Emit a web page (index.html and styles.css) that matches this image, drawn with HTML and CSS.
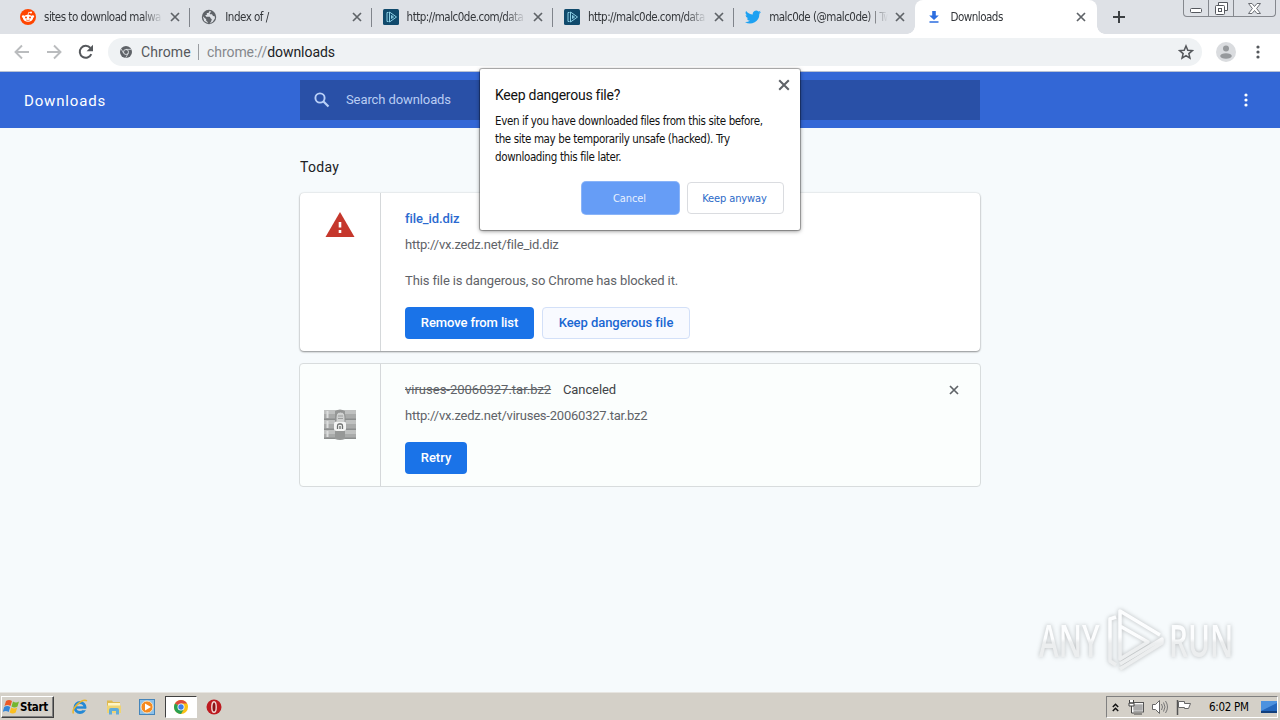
FILE: index.html
```
<!DOCTYPE html>
<html lang="en">
<head>
  <meta charset="UTF-8">
  <title>Downloads</title>
  <link rel="stylesheet" href="styles.css">
</head>
<body>
  <svg class="defs" width="0" height="0">
    <symbol id="x" viewBox="0 0 10 10"><path d="M1 1l8 8M9 1l-8 8" stroke="currentColor" stroke-width="1.7" fill="none"/></symbol>
    <symbol id="play" viewBox="0 0 16 16"><rect width="16" height="16" rx="1.5" fill="#104a6c"/><path d="M5.500 3.500H4v9h1.500M6.500 3v10l7-5zM8.500 6.500v3l2-1.500z" stroke="#8bd0e6" fill="none"/></symbol>
    <symbol id="dots" viewBox="0 0 4 14"><circle cx="2" cy="2" r="1.6"/><circle cx="2" cy="7" r="1.6"/><circle cx="2" cy="12" r="1.6"/></symbol>
  </svg>

  <div class="tabs">
    <div class="tab">
      <svg class="favicon" viewBox="0 0 16 16"><circle cx="8" cy="8" r="8" fill="#ff4500"/><ellipse cx="8" cy="9.2" rx="5" ry="3.5" fill="#fff"/><circle cx="3.2" cy="7.6" r="1.3" fill="#fff"/><circle cx="12.8" cy="7.6" r="1.3" fill="#fff"/><circle cx="11" cy="3.6" r="1" fill="#fff"/><path d="M8 6l.7-2.7 2.3.4" stroke="#fff" stroke-width=".8" fill="none"/><circle cx="6" cy="8.5" r="1" fill="#ff4500"/><circle cx="10" cy="8.5" r="1" fill="#ff4500"/><path d="M6 10.9q2 1.2 4 0" stroke="#ff4500" stroke-width=".7" fill="none"/></svg>
      <span class="tab-title">sites to download malwa</span>
      <svg class="close"><use href="#x"/></svg>
    </div>
    <div class="tab">
      <svg class="favicon" viewBox="0 0 16 16"><circle cx="8" cy="8" r="7.2" fill="#5f6368"/><path d="M8.8 1.8L7.4 4H5.8v2H4.2l1 1.7h3.6l1 1.8 1 .8-.7 2.2-1.3 2 3-1.7 2.2-3.5-.3-2-1.7-.4-1-1.6H9l-.3-1.3 1.5-1z M1.8 7.3l3.4 3v1.5l1.5 1.1v1.2L3.2 12z" fill="#dee1e6"/></svg>
      <span class="tab-title">Index of /</span>
      <svg class="close"><use href="#x"/></svg>
    </div>
    <div class="tab">
      <svg class="favicon"><use href="#play"/></svg>
      <span class="tab-title">http://malc0de.com/data</span>
      <svg class="close"><use href="#x"/></svg>
    </div>
    <div class="tab">
      <svg class="favicon"><use href="#play"/></svg>
      <span class="tab-title">http://malc0de.com/data</span>
      <svg class="close"><use href="#x"/></svg>
    </div>
    <div class="tab last">
      <svg class="favicon" viewBox="0 0 24 24"><path fill="#1da1f2" d="M24 4.6a10 10 0 0 1-2.8.8 5 5 0 0 0 2.1-2.7 10 10 0 0 1-3.1 1.2 4.9 4.9 0 0 0-8.4 4.5A14 14 0 0 1 1.7 3.1a4.9 4.9 0 0 0 1.5 6.6 5 5 0 0 1-2.2-.6 4.9 4.9 0 0 0 3.9 4.9 5 5 0 0 1-2.2.1 4.9 4.9 0 0 0 4.6 3.4A9.9 9.9 0 0 1 0 19.5 14 14 0 0 0 21.5 7.1 10 10 0 0 0 24 4.6z"/></svg>
      <span class="tab-title">malc0de (@malc0de) | Tw</span>
      <svg class="close"><use href="#x"/></svg>
    </div>
    <div class="tab active">
      <svg class="favicon" viewBox="0 0 16 16"><path d="M6.2 2h3.6v4.5h3L8 11 3.2 6.500h3zM3.500 12.300h9v1.500h-9z" fill="#2c6ee0"/></svg>
      <span class="tab-title">Downloads</span>
      <svg class="close"><use href="#x"/></svg>
    </div>
    <svg class="new-tab" viewBox="0 0 12 12"><path d="M6 0v12M0 6h12" stroke="#3c4043" stroke-width="2"/></svg>
    <div class="window-buttons">
      <span><svg width="12" height="6"><rect x=".5" y=".5" width="11" height="4" rx="1" fill="#fff" stroke="#55585e"/></svg></span>
      <span><svg width="13" height="13"><path d="M3.500 3.500v-3h9v8h-3" fill="#fff" stroke="#55585e"/><rect x=".5" y="3.500" width="9" height="9" rx="1" fill="#fff" stroke="#55585e"/><rect x="3.500" y="6.500" width="3" height="3" fill="none" stroke="#55585e"/></svg></span>
      <span class="wide"><svg width="13" height="11"><path d="M.5.500h3.500l2.500 3 2.500-3h3.500L8.600 5.500l3.900 5H9l-2.500-3-2.500 3H.5l3.900-5z" fill="#fff" stroke="#6b6e74"/></svg></span>
    </div>
  </div>

  <div class="toolbar">
    <svg class="nav" viewBox="0 0 16 16"><path d="M15 8H2M8 1.500L1.500 8 8 14.500" stroke="#babcbe" stroke-width="1.900" fill="none"/></svg>
    <svg class="nav" viewBox="0 0 16 16"><path d="M1 8h13M8 1.500L14.500 8 8 14.500" stroke="#babcbe" stroke-width="1.900" fill="none"/></svg>
    <svg class="nav" viewBox="0 0 16 16"><path d="M13.300 10.200A6 6 0 1 1 12.400 4" stroke="#55585c" stroke-width="2" fill="none"/><path d="M15 .8v6.400H8.600z" fill="#55585c"/></svg>
    <div class="omnibox">
      <svg class="chrome" viewBox="0 0 12 12"><circle cx="6" cy="6" r="6" fill="#5f6368"/><circle cx="6" cy="6" r="2.500" fill="#5f6368" stroke="#eef1f4" stroke-width=".8"/><path d="M6 3.400h5.300M3.700 7.300L1.100 2.900M8.300 7.300L5.700 11.800" stroke="#eef1f4" stroke-width=".7"/></svg>
      <span class="site">Chrome</span>
      <span class="bar"></span>
      <span class="url"><i>chrome://</i>downloads</span>
      <svg class="star" viewBox="0 0 24 24"><path d="M12 3l2.700 6.300 6.800.6-5.200 4.500 1.600 6.700L12 17.500l-5.900 3.600 1.600-6.700-5.200-4.500 6.800-.6z" fill="none" stroke="#55585c" stroke-width="2.300"/></svg>
    </div>
    <svg class="avatar" viewBox="0 0 20 20"><circle cx="10" cy="10" r="10" fill="#dadcdf"/><circle cx="10" cy="6.500" r="3" fill="#96999c"/><ellipse cx="10" cy="14" rx="5.800" ry="2.800" fill="#96999c"/></svg>
    <svg class="menu"><use href="#dots"/></svg>
  </div>

  <div class="header">
    <h1>Downloads</h1>
    <div class="search">
      <svg viewBox="0 0 16 16"><circle cx="6" cy="6" r="4.600" fill="none" stroke="#b9d0f8" stroke-width="1.900"/><path d="M9.500 9.500l5 5" stroke="#b9d0f8" stroke-width="2.200"/></svg>
      <span>Search downloads</span>
    </div>
    <svg class="menu"><use href="#dots"/></svg>
  </div>

  <div class="content">
    <h2>Today</h2>
    <div class="card danger">
      <div class="file-icon">
        <svg width="30" height="25" viewBox="0 0 30 25"><path d="M15 0l14.500 25H.5z" fill="#c5372c"/><path d="M15 10v5.500M15 18v3" stroke="#fff" stroke-width="2.600"/></svg>
      </div>
      <div class="details">
        <div class="name"><a>file_id.diz</a></div>
        <div class="link">http://vx.zedz.net/file_id.diz</div>
        <div class="description">This file is dangerous, so Chrome has blocked it.</div>
        <div class="actions">
          <button class="remove">Remove from list</button>
          <button class="keep">Keep dangerous file</button>
        </div>
      </div>
    </div>
    <div class="card canceled">
      <div class="file-icon">
        <svg width="32" height="32" viewBox="0 0 32 32"><rect y="1" width="32" height="29" rx="1" fill="#a9abaa"/><path d="M0 1h32v4H0zM0 11h32v4H0zM0 21h32v4H0z" fill="#bfc1c0"/><path d="M0 9.500h32v1.500H0zM0 19.500h32v1.500H0zM0 28.500h32v1.500H0z" fill="#8b8e8d"/><path d="M3.500 2v7M3.500 12v7M3.500 22v6" stroke="#dcdedd" stroke-width="2"/><path d="M11 2q5-3 10 0v28q-5 2-10 0z" fill="#969897"/><path d="M12 13V8q0-5 4.500-5T21 8v5z" fill="#cfd1d0" stroke="#8d8f8e"/><path d="M14 7h5M14 9.500h5" stroke="#9c9e9d"/><rect x="10" y="12.500" width="12" height="9.500" rx="2.500" fill="#f4f5f4"/><path d="M13.500 20v-3q0-2 1.500-2h2q1.500 0 1.500 2v3M16 17v3" fill="none" stroke="#6d706f" stroke-width="1.300"/></svg>
      </div>
      <div class="details">
        <div class="name"><s>viruses-20060327.tar.bz2</s><span>Canceled</span><svg class="close"><use href="#x"/></svg></div>
        <div class="link">http://vx.zedz.net/viruses-20060327.tar.bz2</div>
        <div class="actions"><button class="retry">Retry</button></div>
      </div>
    </div>
  </div>

  <div class="watermark">
    <span>ANY</span>
    <svg width="58" height="64" viewBox="0 0 58 64">
      <linearGradient id="fade" gradientUnits="userSpaceOnUse" x1="0" y1="0" x2="0" y2="64"><stop offset=".45" stop-color="#fcfdfe"/><stop offset=".55" stop-color="#eceeef"/></linearGradient>
      <g fill="none" stroke="url(#fade)" stroke-width="3.500" stroke-linejoin="round"><path d="M9 9L3 11v42l6 4"/><path d="M53 27L13 3v48l28-17-28-16"/><path d="M13 61l42-26v-4L13 56"/></g>
    </svg>
    <span>RUN</span>
  </div>

  <div class="dialog">
    <svg class="dialog-close"><use href="#x"/></svg>
    <h3>Keep dangerous file?</h3>
    <p>Even if you have downloaded files from this site before,<br>the site may be temporarily unsafe (hacked). Try<br>downloading this file later.</p>
    <div class="dialog-actions">
      <button class="cancel">Cancel</button>
      <button class="anyway">Keep anyway</button>
    </div>
  </div>

  <div class="taskbar">
    <div class="start">
      <svg width="17" height="16" viewBox="0 0 17 16"><path d="M3 2q3-2 6 0L7.500 7q-3-2-6 0z" fill="#ed5a26"/><path d="M10 2.500q3 2 6 0L14.500 7.500q-3 2-6 0z" fill="#75b62e"/><path d="M1.200 8q3-2 6 0l-1.500 5q-3-2-6 0z" fill="#3586d8"/><path d="M8.200 8.500q3 2 6 0l-1.500 5q-3 2-6 0z" fill="#fbbf20"/></svg>
      <span>Start</span>
    </div>
    <div class="task"><svg viewBox="0 0 16 16"><circle cx="8" cy="8.500" r="5" fill="none" stroke="#2589d5" stroke-width="3"/><path d="M4 8.500h9.500" stroke="#2589d5" stroke-width="2.400"/><path d="M11 10.500h5" stroke="#d4d0c8" stroke-width="1.500"/><path d="M1.500 14.500C-1 10 10-1 15 1.800" fill="none" stroke="#eab62d" stroke-width="1.500"/></svg></div>
    <div class="task"><svg viewBox="0 0 16 16"><path d="M1 1.500h5l1 1.500h7v11H1z" fill="#dfb950"/><path d="M2 4h12v5H2z" fill="#fff5c4"/><path d="M1 6.500h14v7.500H1z" fill="#efd473"/><path d="M3 15.500V11q0-2 2-2h6q2 0 2 2v4.500h-3V12H6v3.500z" fill="#5fabd9"/></svg></div>
    <div class="task"><svg viewBox="0 0 16 16"><rect x=".5" y=".5" width="15" height="15" fill="#8cc1ea" stroke="#4585ba"/><circle cx="8" cy="8" r="6" fill="#f58a1f" stroke="#fce2bd"/><path d="M6 4.500v7L12 8z" fill="#fff"/></svg></div>
    <div class="task pressed"><svg viewBox="0 0 16 16"><circle cx="8" cy="8" r="7" fill="#fbc116"/><path d="M8 8L1.940 4.500A7 7 0 0 1 14.060 4.500z" fill="#dd4b3e"/><path d="M8 8L1.940 4.500A7 7 0 0 0 8 15l3-5z" fill="#2aa052"/><path d="M8 4.500h6.060L15 8H8z" fill="#fbc116"/><circle cx="8" cy="8" r="3.500" fill="#fff"/><circle cx="8" cy="8" r="2.700" fill="#3f7fea"/></svg></div>
    <div class="task"><svg viewBox="0 0 16 16"><circle cx="8" cy="8" r="7.500" fill="#bd1a20"/><ellipse cx="8" cy="8" rx="2.200" ry="5.300" fill="#8a1217" stroke="#f2d8d6" stroke-width="1.400"/></svg></div>
    <div class="tray">
      <svg width="7" height="9" viewBox="0 0 7 9"><path d="M.8 4l2.700-2.700L6.200 4M.8 8l2.700-2.700L6.200 8" stroke="#111" stroke-width="1.500" fill="none"/></svg>
      <svg class="net" width="16" height="15" viewBox="0 0 16 15"><rect x="4.500" y="3.500" width="11" height="8" fill="#aaa" stroke="#f8f8f8" stroke-width="1.600"/><rect x="3.500" y="2.500" width="12" height="9.500" fill="none" stroke="#555"/><path d="M6 14h8M1.500 0v3h4V0M1 3h5v3H1zM3.500 6v7H6" stroke="#444" fill="#fff"/></svg>
      <svg class="sound" width="16" height="14" viewBox="0 0 16 14"><path d="M.5 4.500h3l4-4v13l-4-4h-3z" fill="#fff" stroke="#666"/><path d="M9.500 4q2 3 0 6M11.500 2.500q3 4.500 0 9M13.500 1q4 6 0 12" fill="none" stroke="#777"/></svg>
      <svg class="flag" width="16" height="15" viewBox="0 0 16 15"><path d="M1.500 0v15" stroke="#555" stroke-width="1.500"/><path d="M2.500 1.500h6v2h6l-2 5h-4v-1h-6z" fill="#fff" stroke="#666"/></svg>
      <span>6:02 PM</span>
      <svg class="desktop" width="16" height="13" viewBox="0 0 16 13"><rect width="16" height="10" fill="#2367bd"/><path d="M0 10L16 2V0H0z" fill="#4c92df"/><path d="M0 10h16v2H0z" fill="#123f7d"/></svg>
    </div>
  </div>
</body>
</html>
```
FILE: styles.css
```
* {
  margin: 0;
  padding: 0;
  box-sizing: border-box;
}
body {
  width: 1280px;
  height: 720px;
  display: flex;
  flex-direction: column;
  overflow: hidden;
  position: relative;
  background: #f6fafc;
  font-family: Roboto, sans-serif;
  font-size: 13px;
  color: #202124;
}
svg {
  flex: none;
  display: block;
}
.defs {
  position: absolute;
}
.tabs {
  height: 34px;
  flex: none;
  display: flex;
  padding-left: 9px;
  background: #dee1e6;
  font-family: "DejaVu Sans Condensed", "DejaVu Sans", sans-serif;
  font-stretch: condensed;
  font-size: 11.5px;
  letter-spacing: -.5px;
}
.tab {
  width: 181.300px;
  flex: none;
  display: flex;
  align-items: center;
  padding: 0 10px 0 11px;
  background: linear-gradient(#80848b, #80848b) right 8px / 1px 19px no-repeat;
}
.tab.last {
  background: none;
}
.tab.active {
  width: 181.500px;
  height: 34px;
  position: relative;
  background: #fff;
  border-radius: 8px 8px 0 0;
  padding-left: 11px;
}
/* curved feet of the active tab */
.tab.active::before,
.tab.active::after {
  content: '';
  position: absolute;
  bottom: 0;
  width: 8px;
  height: 8px;
}
.tab.active::before {
  left: -8px;
  background: radial-gradient(circle at 0 0, transparent 7.500px, #fff 8px);
}
.tab.active::after {
  right: -8px;
  background: radial-gradient(circle at 100% 0, transparent 7.500px, #fff 8px);
}
.favicon {
  width: 16px;
  height: 16px;
}
.tab-title {
  width: 120px;
  margin-left: 8px;
  white-space: nowrap;
  color: #33363a;
  -webkit-mask-image: linear-gradient(to right, #000 98px, transparent 119px);
}
.close {
  width: 10px;
  height: 10px;
  color: #5f6368;
}
.tab .close {
  margin-left: auto;
}
.active .close {
  margin-right: 1px;
}
.new-tab {
  width: 12px;
  height: 12px;
  margin: 11px 0 0 16px;
}
.window-buttons {
  display: flex;
  width: 93px;
  height: 17px;
  margin: 0 4px 0 auto;
  border: 1px solid #85888e;
  border-top: 0;
  border-radius: 0 0 4px 4px;
}
.window-buttons span {
  width: 25px;
  display: flex;
  align-items: center;
  justify-content: center;
  border-right: 1px solid #85888e;
}
.window-buttons span:first-child {
  align-items: flex-end;
  padding-bottom: 2px;
}
.window-buttons .wide {
  width: 41px;
  border: 0;
}
.toolbar {
  height: 38px;
  flex: none;
  display: flex;
  align-items: center;
  gap: 16px;
  padding: 0 19px 1px 14px;
  background: #fff;
  border-bottom: 1px solid #b9c2d4;
}
.nav {
  width: 16px;
  height: 16px;
}
.omnibox {
  width: 1094px;
  height: 28px;
  margin-left: -2px;
  display: flex;
  align-items: center;
  padding: 0 8px 0 12px;
  border-radius: 14px;
  background: #eff2f4;
  font-size: 14px;
  color: #55585c;
}
.chrome {
  width: 12px;
  height: 12px;
}
.site {
  margin-left: 9px;
  width: 50px;
  letter-spacing: .1px;
}
.bar {
  width: 1px;
  height: 16px;
  margin: 0 8px 0 7px;
  background: #9a9da1;
}
.url {
  color: #202124;
  letter-spacing: -.06px;
}
.url i {
  font-style: normal;
  color: #85888c;
}
.star {
  width: 16px;
  height: 16px;
  margin-left: auto;
}
.avatar {
  width: 20px;
  height: 20px;
  margin-left: -2px;
}
.menu {
  width: 4px;
  height: 14px;
  fill: #55585c;
}
.toolbar .menu {
  margin-left: 4px;
}
.header {
  height: 56px;
  flex: none;
  display: flex;
  align-items: center;
  padding: 0 32px 0 24px;
  background: #3367d6;
}
.header h1 {
  width: 276px;
  padding-top: 1px;
  font-size: 15px;
  font-weight: 400;
  letter-spacing: .85px;
  color: #fff;
}
.search {
  width: 680px;
  height: 40px;
  display: flex;
  align-items: center;
  gap: 16px;
  padding-left: 14px;
  background: #2950a7;
  color: #b9cdf3;
  letter-spacing: -.1px;
}
.search span {
  margin-top: -1px;
}
.search svg {
  width: 16px;
  height: 16px;
}
.header .menu {
  margin-left: auto;
  fill: #fff;
}
.content {
  width: 680px;
  margin: 0 auto;
  flex: 1;
}
.content h2 {
  height: 65px;
  padding-top: 29px;
  font-size: 14px;
  line-height: 20px;
  font-weight: 400;
  letter-spacing: .3px;
}
.card {
  display: flex;
  border-radius: 4px;
  background: #fff;
}
.danger {
  height: 158px;
  margin-bottom: 12px;
  box-shadow: 0 1px 2px rgba(0,0,0,.4), 0 0 2px rgba(0,0,0,.15);
}
.canceled {
  height: 124px;
  width: 682px;
  margin-left: -1px;
  background: #fbfefd;
  border: 1px solid #d8dcdd;
}
.file-icon {
  width: 81px;
  border-right: 1px solid #d5d8da;
  display: flex;
  justify-content: center;
}
.danger .file-icon {
  padding-top: 19px;
}
.canceled .file-icon {
  align-items: center;
}
.details {
  flex: 1;
  padding: 15px 21px 0 24px;
  color: #5f6368;
}
.name {
  display: flex;
  align-items: center;
  height: 20px;
  font-weight: 500;
}
.name a {
  color: #2b6ad0;
  letter-spacing: -.1px;
}
.name s {
  font-weight: 400;
  width: 147px;
  white-space: nowrap;
}
.name span {
  margin-left: 11px;
  font-weight: 400;
  color: #414447;
  letter-spacing: -.1px;
}
.name .close {
  margin: 2px 0 0 auto;
}
.link {
  height: 20px;
  margin-top: 7px;
  line-height: 20px;
  letter-spacing: -.22px;
}
.description {
  height: 20px;
  margin-top: 16px;
  line-height: 20px;
  letter-spacing: -.12px;
}
.actions {
  display: flex;
  gap: 8px;
  margin-top: 16px;
}
button {
  height: 32px;
  padding-bottom: 2px;
  border: 0;
  border-radius: 4px;
  font-family: inherit;
  font-size: 13px;
  font-weight: 500;
  color: #fff;
  background: #1a73e8;
  white-space: nowrap;
}
.remove {
  width: 129px;
  letter-spacing: -.1px;
}
.keep {
  width: 148px;
  border: 1px solid #d3e0f8;
  color: #1a67d2;
  background: #f8faff;
  letter-spacing: -.05px;
}
.retry {
  width: 62px;
}
.dialog {
  position: absolute;
  left: 480px;
  top: 69px;
  width: 320px;
  height: 161px;
  padding: 17px 16px 0 15px;
  background: #fff;
  border-radius: 2px;
  box-shadow: 0 0 0 1px rgba(0,0,0,.25), 0 1px 4px rgba(0,0,0,.5);
  font-family: "DejaVu Sans Condensed", "DejaVu Sans", sans-serif;
  font-stretch: condensed;
  color: #111;
}
.dialog-close {
  position: absolute;
  right: 10px;
  top: 10px;
  width: 12px;
  height: 12px;
  color: #5f6368;
}
.dialog h3 {
  font: 400 14px/18px Roboto, sans-serif;
  letter-spacing: -.25px;
}
.dialog p {
  margin-top: 8px;
  font-size: 11.5px;
  line-height: 18px;
  letter-spacing: -.37px;
  white-space: nowrap;
}
.dialog-actions {
  display: flex;
  justify-content: flex-end;
  gap: 8px;
  margin-top: 16px;
}
.dialog button {
  width: 97px;
  padding: 0 2px 0 0;
  font-weight: 400;
  font-size: 11px;
  letter-spacing: -.1px;
}
.dialog .cancel {
  background: #669df6;
  box-shadow: 0 0 0 1px #8ab4f8;
  color: #e8f0fe;
}
.dialog .anyway {
  background: #fff;
  border: 1px solid #dadce0;
  color: #2b69c8;
}
.watermark {
  position: absolute;
  left: 1039px;
  top: 608px;
  display: flex;
  align-items: center;
  font: 600 45px/64px "Open Sans", sans-serif;
  filter: drop-shadow(0 0 2px rgba(0,0,0,.25));
}
.watermark span {
  width: 63px;
  display: block;
  white-space: nowrap;
  transform: scaleX(.66);
  transform-origin: left;
  background: linear-gradient(#fcfdfe 48%, #eceeef 54%);
  -webkit-background-clip: text;
  color: transparent;
}
.watermark span:first-child {
  width: 96px;
  margin-right: -33px;
}
.watermark span:last-child {
  width: 98px;
}
.watermark svg {
  margin: 0 4px 0 5px;
}
.taskbar {
  height: 28px;
  flex: none;
  display: flex;
  align-items: center;
  padding: 1px 2px 0 1px;
  background: #d4d0c8;
  border-top: 1px solid #e7e5e1;
  font-family: "DejaVu Sans Condensed", "DejaVu Sans", sans-serif;
  font-stretch: condensed;
  font-size: 11.5px;
  letter-spacing: -.3px;
  color: #000;
}
.start {
  width: 53px;
  height: 22px;
  margin-right: 10px;
  display: flex;
  align-items: center;
  padding-left: 1px;
  font-weight: 700;
  border: 1px solid;
  border-color: #fff #404040 #404040 #fff;
  box-shadow: inset -1px -1px #808080;
}
.task {
  width: 32px;
  height: 22px;
  margin-right: 1.600px;
  display: flex;
  align-items: center;
  justify-content: center;
}
.task svg {
  width: 16px;
  height: 16px;
}
.pressed {
  background: #fff;
  border: 1px solid;
  border-color: #404040 #fff #fff #404040;
}
.tray {
  width: 172px;
  height: 22px;
  margin-left: auto;
  display: flex;
  align-items: center;
  padding-left: 5px;
  border: 1px solid;
  border-color: #808080 #fff #fff #808080;
}
.net {
  margin-left: 9px;
}
.sound {
  margin-left: 8px;
}
.flag {
  margin-left: 8px;
}
.tray span {
  width: 40px;
  margin-left: 17px;
  white-space: nowrap;
}
.desktop {
  margin-left: auto;
}
```
